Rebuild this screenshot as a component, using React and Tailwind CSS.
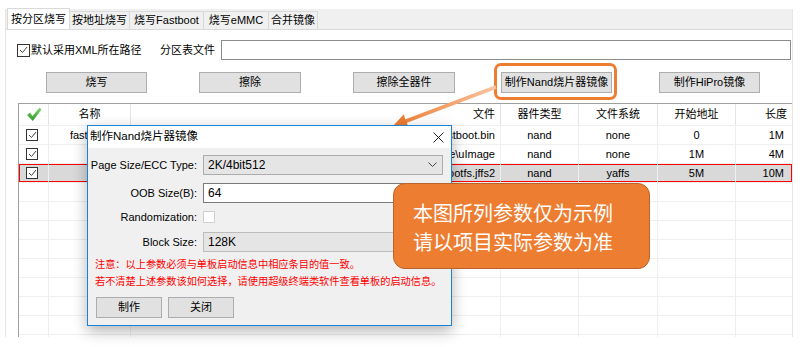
import React from "react";

const cols = "grid grid-cols-[30px_82px_370px_78px_79px_78px_56px]";

const rows = [
	{ id: 1, name: "fastboot", file: "D:\\Hi3518\\image\\fastboot.bin", type: "nand", fs: "none", start: "0", len: "1M" },
	{ id: 2, name: "", file: "D:\\Hi3518\\image\\uImage", type: "nand", fs: "none", start: "1M", len: "4M" },
	{ id: 3, name: "", file: "D:\\Hi3518\\image\\rootfs.jffs2", type: "nand", fs: "yaffs", start: "5M", len: "10M", selected: true },
];

const Check = ({ size = "w-[12px] h-[12px]" }) => (
	<div className={`${size} border border-[#333] bg-white flex items-center justify-center`}>
		<svg width="9" height="8" viewBox="0 0 9 8">
			<polyline points="1,4 3.5,6.5 8,1" fill="none" stroke="#444" strokeWidth="1" />
		</svg>
	</div>
);

const Button = ({ className = "", children }) => (
	<div className={`h-[21px] flex items-center justify-center bg-[#e1e1e1] border border-[#adadad] ${className}`}>
		{children}
	</div>
);

const Tab = ({ active, children, className = "" }) => (
	<div
		className={
			active
				? `h-[21px] flex items-center justify-center bg-white border border-b-0 border-[#d9d9d9] ${className}`
				: `h-[18px] flex items-center justify-center border-r border-t border-[#d9d9d9] ${className}`
		}
	>
		{children}
	</div>
);

const Table = () => {
	const empty = Array.from({ length: 9 });
	return (
		<div className="ml-[12px] mt-[10px] w-[774px] h-[234px] overflow-hidden border-t border-l border-[#a0a0a0]">
			<div className={`${cols} h-[21px]`}>
				<div className="flex items-center justify-center border-r border-[#e5e5e5]">
					<svg width="16" height="15" viewBox="0 0 16 15">
						<defs>
							<linearGradient id="gck" x1="0" y1="0" x2="0" y2="1">
								<stop offset="0" stopColor="#7fd36b" />
								<stop offset="1" stopColor="#2e9a2a" />
							</linearGradient>
						</defs>
						<path d="M1 8 L4 5.5 L6.5 9 L13.5 0.8 L15.5 2.5 L6.8 14 Z" fill="url(#gck)" />
					</svg>
				</div>
				<div className="flex items-center justify-center border-r border-[#e5e5e5]">名称</div>
				<div className="flex items-center justify-end pr-[5px] border-r border-[#e5e5e5]">文件</div>
				<div className="flex items-center justify-center border-r border-[#e5e5e5]">器件类型</div>
				<div className="flex items-center justify-center border-r border-[#e5e5e5]">文件系统</div>
				<div className="flex items-center justify-center border-r border-[#e5e5e5]">开始地址</div>
				<div className="flex items-center justify-end pr-[5px]">长度</div>
			</div>
			{rows.map((r) => (
				<div
					key={r.id}
					className={`${cols} h-[19px] border-t border-[#efefef] ${r.selected ? "bg-[#d9d9d9] shadow-[inset_0_0_0_1px_#ff0000]" : ""}`}
				>
					<div className="flex items-center pl-[7px] border-r border-[#efefef]">
						<Check />
					</div>
					<div className="flex items-center justify-center border-r border-[#efefef]">{r.name}</div>
					<div className="flex items-center justify-end pr-[5px] border-r border-[#efefef]">{r.file}</div>
					<div className="flex items-center justify-center border-r border-[#efefef]">{r.type}</div>
					<div className="flex items-center justify-center border-r border-[#efefef]">{r.fs}</div>
					<div className="flex items-center justify-center border-r border-[#efefef]">{r.start}</div>
					<div className="flex items-center justify-end pr-[8px]">{r.len}</div>
				</div>
			))}
			{empty.map((_, i) => (
				<div key={i} className={`${cols} h-[19px] border-t border-[#efefef]`}>
					<div className="border-r border-[#efefef]"></div>
					<div className="border-r border-[#efefef]"></div>
					<div className="border-r border-[#efefef]"></div>
					<div className="border-r border-[#efefef]"></div>
					<div className="border-r border-[#efefef]"></div>
					<div className="border-r border-[#efefef]"></div>
					<div></div>
				</div>
			))}
		</div>
	);
};

const Dialog = () => (
	<div className="absolute left-[87px] top-[125px] w-[365px] h-[201px] border border-[#1883d7] bg-[#f0f0f0] shadow-[0_5px_14px_rgba(0,0,0,0.3)] flex flex-col">
		<div className="h-[22px] bg-white flex items-center justify-between pl-[2px] pr-[7px] text-[11.5px]">
			<span>制作Nand烧片器镜像</span>
			<svg width="11" height="11" viewBox="0 0 11 11">
				<path d="M0.5 0.5 L10.5 10.5 M10.5 0.5 L0.5 10.5" stroke="#222" strokeWidth="1" />
			</svg>
		</div>
		<div className="flex flex-col pt-[7px] text-[11px]">
			<div className="flex items-center h-[20px]">
				<div className="w-[109px] text-right">Page Size/ECC Type:</div>
				<div className="ml-[6px] w-[240px] h-[20px] bg-[#e5e5e5] border border-[#acacac] flex items-center justify-between pl-[4px] pr-[5px] text-[12px]">
					<span>2K/4bit512</span>
					<svg width="9" height="6" viewBox="0 0 9 6">
						<polyline points="0.5,0.5 4.5,4.5 8.5,0.5" fill="none" stroke="#444" strokeWidth="1" />
					</svg>
				</div>
			</div>
			<div className="flex items-center h-[20px] mt-[8px]">
				<div className="w-[109px] text-right">OOB Size(B):</div>
				<div className="ml-[6px] w-[240px] h-[20px] bg-white border border-[#7a7a7a] flex items-center pl-[4px] text-[12px]">64</div>
			</div>
			<div className="flex items-center h-[20px] mt-[4px]">
				<div className="w-[109px] text-right">Randomization:</div>
				<div className="ml-[6px] w-[12px] h-[12px] bg-white border border-[#cfcfcf]"></div>
			</div>
			<div className="flex items-center h-[20px] mt-[5px]">
				<div className="w-[109px] text-right">Block Size:</div>
				<div className="ml-[6px] w-[240px] h-[20px] bg-[#e5e5e5] border border-[#bcbcbc] flex items-center pl-[4px] text-[12px]">128K</div>
			</div>
			<div className="mt-[3px] pl-[7px] text-[10.2px] leading-[17px] text-[#ff0000] font-['Noto_Sans_CJK_SC',sans-serif]">
				<div>注意：以上参数必须与单板启动信息中相应条目的值一致。</div>
				<div>若不清楚上述参数该如何选择，请使用超级终端类软件查看单板的启动信息。</div>
			</div>
			<div className="flex mt-[8px] pl-[8px] gap-[6px]">
				<Button className="w-[66px]">制作</Button>
				<Button className="w-[66px]">关闭</Button>
			</div>
		</div>
	</div>
);

const Arrow = () => (
	<svg className="absolute left-0 top-0 pointer-events-none" width="805" height="347" viewBox="0 0 805 347">
		<defs>
			<linearGradient id="garr" x1="496" y1="87" x2="393" y2="126" gradientUnits="userSpaceOnUse">
				<stop offset="0" stopColor="#f8c4a0" />
				<stop offset="1" stopColor="#ed7d31" />
			</linearGradient>
		</defs>
		<line x1="496" y1="87" x2="405" y2="121.5" stroke="url(#garr)" strokeWidth="4" />
		<polygon points="393,126 408.6,127.5 403.6,114.5" fill="#ed7d31" />
	</svg>
);

const App = () => {
	return (
		<div className="relative w-[805px] h-[347px] overflow-hidden whitespace-nowrap bg-white text-[11px] text-black font-['Liberation_Sans','Noto_Sans_CJK_SC',sans-serif]">
			<div className="ml-[5px] mt-[9px] w-[788px] h-[328px] border-r border-l border-[#e6e6e6]">
				<div className="flex items-end h-[21px] bg-[#f0f0f0] border-b border-[#d9d9d9]">
					<Tab active className="ml-[1px] w-[63px]">按分区烧写</Tab>
					<Tab className="w-[60px]">按地址烧写</Tab>
					<Tab className="w-[74px]">烧写Fastboot</Tab>
					<Tab className="w-[65px]">烧写eMMC</Tab>
					<Tab className="w-[49px]">合并镜像</Tab>
				</div>
				<div className="flex items-center h-[20px] mt-[10px]">
					<div className="ml-[11px]">
						<Check size="w-[13px] h-[13px]" />
					</div>
					<span className="ml-[1px] w-[111px]">默认采用XML所在路径</span>
					<span className="ml-[18px] w-[55px]">分区表文件</span>
					<div className="ml-[6px] w-[570px] h-[20px] border border-[#8c8c8c] bg-white"></div>
				</div>
				<div className="flex mt-[12px]">
					<Button className="ml-[40px] w-[101px]">烧写</Button>
					<Button className="ml-[52px] w-[102px]">擦除</Button>
					<Button className="ml-[52px] w-[102px]">擦除全器件</Button>
					<Button className="ml-[46px] w-[111px]">制作Nand烧片器镜像</Button>
					<Button className="ml-[47px] w-[101px]">制作HiPro镜像</Button>
				</div>
				<Table />
			</div>
			<div className="absolute left-[494px] top-[63px] w-[123px] h-[37px] border-[3px] border-[#ed7d31] rounded-[7px]"></div>
			<Arrow />
			<Dialog />
			<div className="absolute left-[393px] top-[183px] w-[257px] h-[86px] bg-[#ed7d31] border border-[#b8652b] rounded-[12px] pl-[19px] pt-[14px] text-[20px] leading-[29px] text-white font-['Noto_Sans_CJK_SC',sans-serif]">
				<div>本图所列参数仅为示例</div>
				<div>请以项目实际参数为准</div>
			</div>
		</div>
	);
};

export default App;
